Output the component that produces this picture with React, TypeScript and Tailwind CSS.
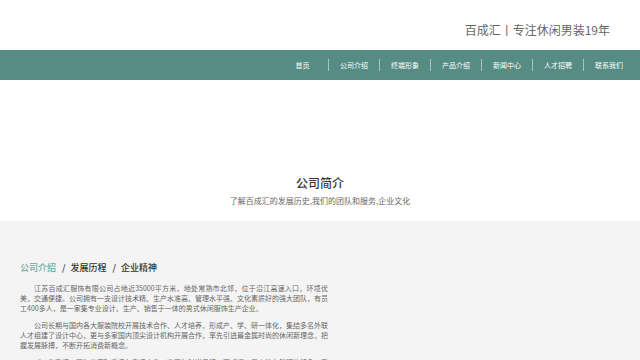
import React from "react";

const font = { fontFamily: '"Noto Sans CJK SC", "Noto Sans", sans-serif' };

const navItems = ["首页", "公司介绍", "终端形象", "产品介绍", "新闻中心", "人才招聘", "联系我们"];

export default function App() {
  return (
    <div className="w-[640px] h-[360px] overflow-hidden bg-white" style={font}>
      <header className="h-[50px] flex items-center justify-end pr-[30px] pt-[10px]">
        <div className="text-[12px] text-[#666] leading-none">百成汇丨专注休闲男装19年</div>
      </header>
      <nav className="h-[30px] bg-[#568c83] flex items-center justify-end pr-[6px]">
        {navItems.map((item, i) => (
          <div
            key={item}
            className={`w-[51px] h-[12px] flex items-center justify-center text-[7px] leading-none text-white ${i === 0 ? "" : "border-l border-[#a9c7c2]"}`}
          >
            {item}
          </div>
        ))}
      </nav>
      <section className="h-[141px] flex flex-col items-center pt-[95px]">
        <h1 className="text-[12px] leading-[16px] text-[#333] font-medium">公司简介</h1>
        <p className="mt-[5px] text-[8px] leading-[10px] text-[#666]">了解百成汇的发展历史,我们的团队和服务,企业文化</p>
      </section>
      <section className="bg-[#f4f4f4] h-[139px] pt-[40px] pl-[20px]">
        <div className="flex items-center text-[9px] leading-[14px] font-medium">
          <span className="text-[#6aa7a0]">公司介绍</span>
          <span className="text-[#333] ml-[6px]">/</span>
          <span className="text-[#333] ml-[5px]">发展历程</span>
          <span className="text-[#333] ml-[6px]">/</span>
          <span className="text-[#333] ml-[5px]">企业精神</span>
        </div>
        <div className="mt-[8px] w-[308px] text-[7px] leading-[10px] text-[#666] text-justify">
          <p className="indent-[14px] mb-[7px]">
            江苏百成汇服饰有限公司占地近35000平方米，地处常熟市北郊，位于沿江高速入口，环境优美，交通便捷。公司拥有一支设计技术精、生产水准高、管理水平强、文化素质好的强大团队，有员工400多人，是一家集专业设计、生产、销售于一体的男式休闲服饰生产企业。
          </p>
          <p className="indent-[14px] mb-[7px]">
            公司长期与国内各大服装院校开展技术合作、人才培养，形成产、学、研一体化，集结多名外联人才组建了设计中心，更与多家国内顶尖设计机构开展合作，率先引进最金属时尚的休闲新理念，把握发展脉搏，不断开拓消费新概念。
          </p>
          <p className="indent-[14px]">
            “工作激情，百年传奇”秉承年激情文化，造百年时尚品牌，百成汇，男上装有鲜明的特色，登同时尚前沿，引领潮流风尚。
          </p>
        </div>
      </section>
    </div>
  );
}
